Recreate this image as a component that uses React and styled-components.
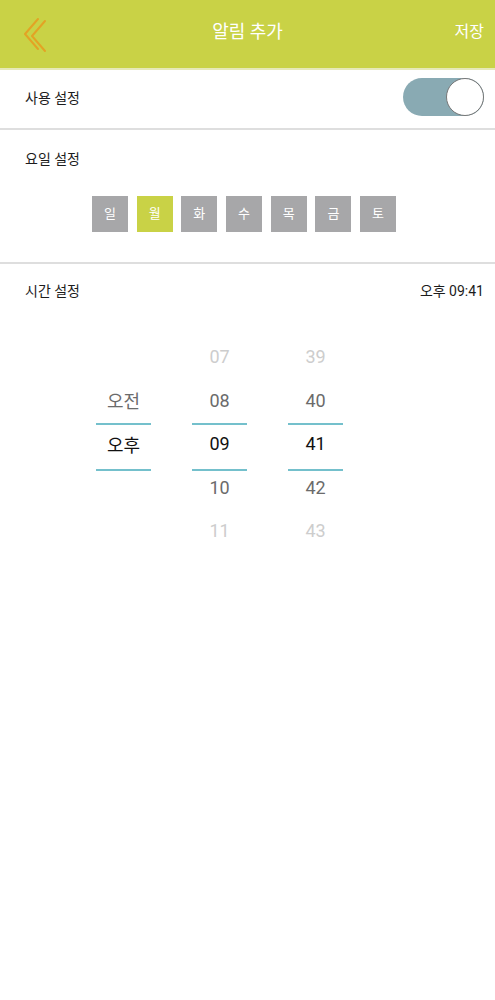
import React from 'react';
import styled, { createGlobalStyle } from 'styled-components';

const GlobalStyle = createGlobalStyle`
  body {
    margin: 0;
    background: #fff;
    font-family: Roboto, "Noto Sans CJK KR", sans-serif;
  }
`;

const days = ['일', '월', '화', '수', '목', '금', '토'];

const App = () => {
  return (
    <Page>
      <GlobalStyle />
      <Header>
        <BackBtn aria-label="back">
          <svg width="26" height="36" viewBox="0 0 26 36" fill="none">
            <path d="M15 2 L2 17 L15 32" stroke="#e3a324" strokeWidth="2" strokeLinecap="round" strokeLinejoin="round" />
            <path d="M22 4 L9 19 L22 34" stroke="#e3a324" strokeWidth="2" strokeLinecap="round" strokeLinejoin="round" />
          </svg>
        </BackBtn>
        <Title>알림 추가</Title>
        <SaveBtn>저장</SaveBtn>
      </Header>

      <Row>
        <Label>사용 설정</Label>
        <Toggle $on>
          <Knob />
        </Toggle>
      </Row>

      <Section>
        <Label>요일 설정</Label>
        <Days>
          {days.map((d, i) => (
            <Day key={d} $active={i === 1}>{d}</Day>
          ))}
        </Days>
      </Section>

      <TimeHead>
        <Label>시간 설정</Label>
        <TimeValue>오후 09:41</TimeValue>
      </TimeHead>

      <Picker>
        <Column>
          <Item $level={-2} />
          <Item $level={1}>오전</Item>
          <Item $level={0}>오후</Item>
          <Item $level={-2} />
          <Item $level={-2} />
        </Column>
        <Column>
          <Item $level={2}>07</Item>
          <Item $level={1}>08</Item>
          <Item $level={0}>09</Item>
          <Item $level={1}>10</Item>
          <Item $level={2}>11</Item>
        </Column>
        <Column>
          <Item $level={2}>39</Item>
          <Item $level={1}>40</Item>
          <Item $level={0}>41</Item>
          <Item $level={1}>42</Item>
          <Item $level={2}>43</Item>
        </Column>
      </Picker>
    </Page>
  );
};

const Page = styled.div`
  width: 495px;
  min-height: 1000px;
  background: #fff;
`;

const Header = styled.div`
  height: 68px;
  background: #c9d246;
  border-bottom: 2px solid #e6e9b8;
  display: flex;
  align-items: center;
  justify-content: space-between;
  padding: 0 11px 0 23px;
  position: relative;
`;

const BackBtn = styled.div`
  width: 26px;
  height: 36px;
  margin-top: 2px;
  display: flex;
`;

const Title = styled.div`
  position: absolute;
  left: 0;
  right: 0;
  text-align: center;
  color: #fff;
  font-size: 18px;
  pointer-events: none;
  margin-top: -8px;
`;

const SaveBtn = styled.div`
  color: #fff;
  font-size: 16px;
  margin-top: -8px;
`;

const Row = styled.div`
  height: 60px;
  display: flex;
  align-items: center;
  justify-content: space-between;
  padding: 0 11px 5px 25px;
  box-sizing: border-box;
  border-bottom: 2px solid #dedede;
`;

const Label = styled.div`
  font-size: 14px;
  color: #1c1c1c;
`;

const Toggle = styled.div`
  width: 81px;
  height: 38px;
  border-radius: 19px;
  background: ${p => (p.$on ? '#89aab3' : '#cfcfcf')};
  display: flex;
  justify-content: ${p => (p.$on ? 'flex-end' : 'flex-start')};
  margin-top: 1px;
`;

const Knob = styled.div`
  width: 36px;
  height: 36px;
  border-radius: 50%;
  background: #fff;
  border: 1px solid #777;
`;

const Section = styled.div`
  padding: 18px 25px 30px;
  border-bottom: 2px solid #dedede;
`;

const Days = styled.div`
  display: flex;
  justify-content: center;
  gap: 8.7px;
  margin-top: 28px;
  padding-right: 7px;
`;

const Day = styled.div`
  width: 36px;
  height: 36px;
  background: ${p => (p.$active ? '#c9d246' : '#a7a7a9')};
  color: #fff;
  font-size: 13px;
  display: flex;
  align-items: center;
  justify-content: center;
  padding-bottom: 4px;
  box-sizing: border-box;
`;

const TimeHead = styled.div`
  display: flex;
  justify-content: space-between;
  align-items: center;
  padding: 16px 11px 0 25px;
`;

const TimeValue = styled.div`
  font-size: 14px;
  color: #1c1c1c;
`;

const Picker = styled.div`
  display: flex;
  justify-content: center;
  gap: 41px;
  margin-top: 35px;
  padding-right: 56px;
`;

const Column = styled.div`
  width: 55px;
  display: flex;
  flex-direction: column;
  position: relative;

  &::before,
  &::after {
    content: '';
    position: absolute;
    left: 0;
    right: 0;
    height: 2px;
    background: #74c0cc;
  }
  &::before { top: 88px; }
  &::after { top: 134px; }
`;

const levelColor = ['#111', '#6b6b6b', '#cdcdcd'];

const Item = styled.div`
  height: 43.5px;
  display: flex;
  align-items: center;
  justify-content: center;
  font-size: 18px;
  color: ${p => (p.$level < 0 ? 'transparent' : levelColor[p.$level])};
`;

export default App;
